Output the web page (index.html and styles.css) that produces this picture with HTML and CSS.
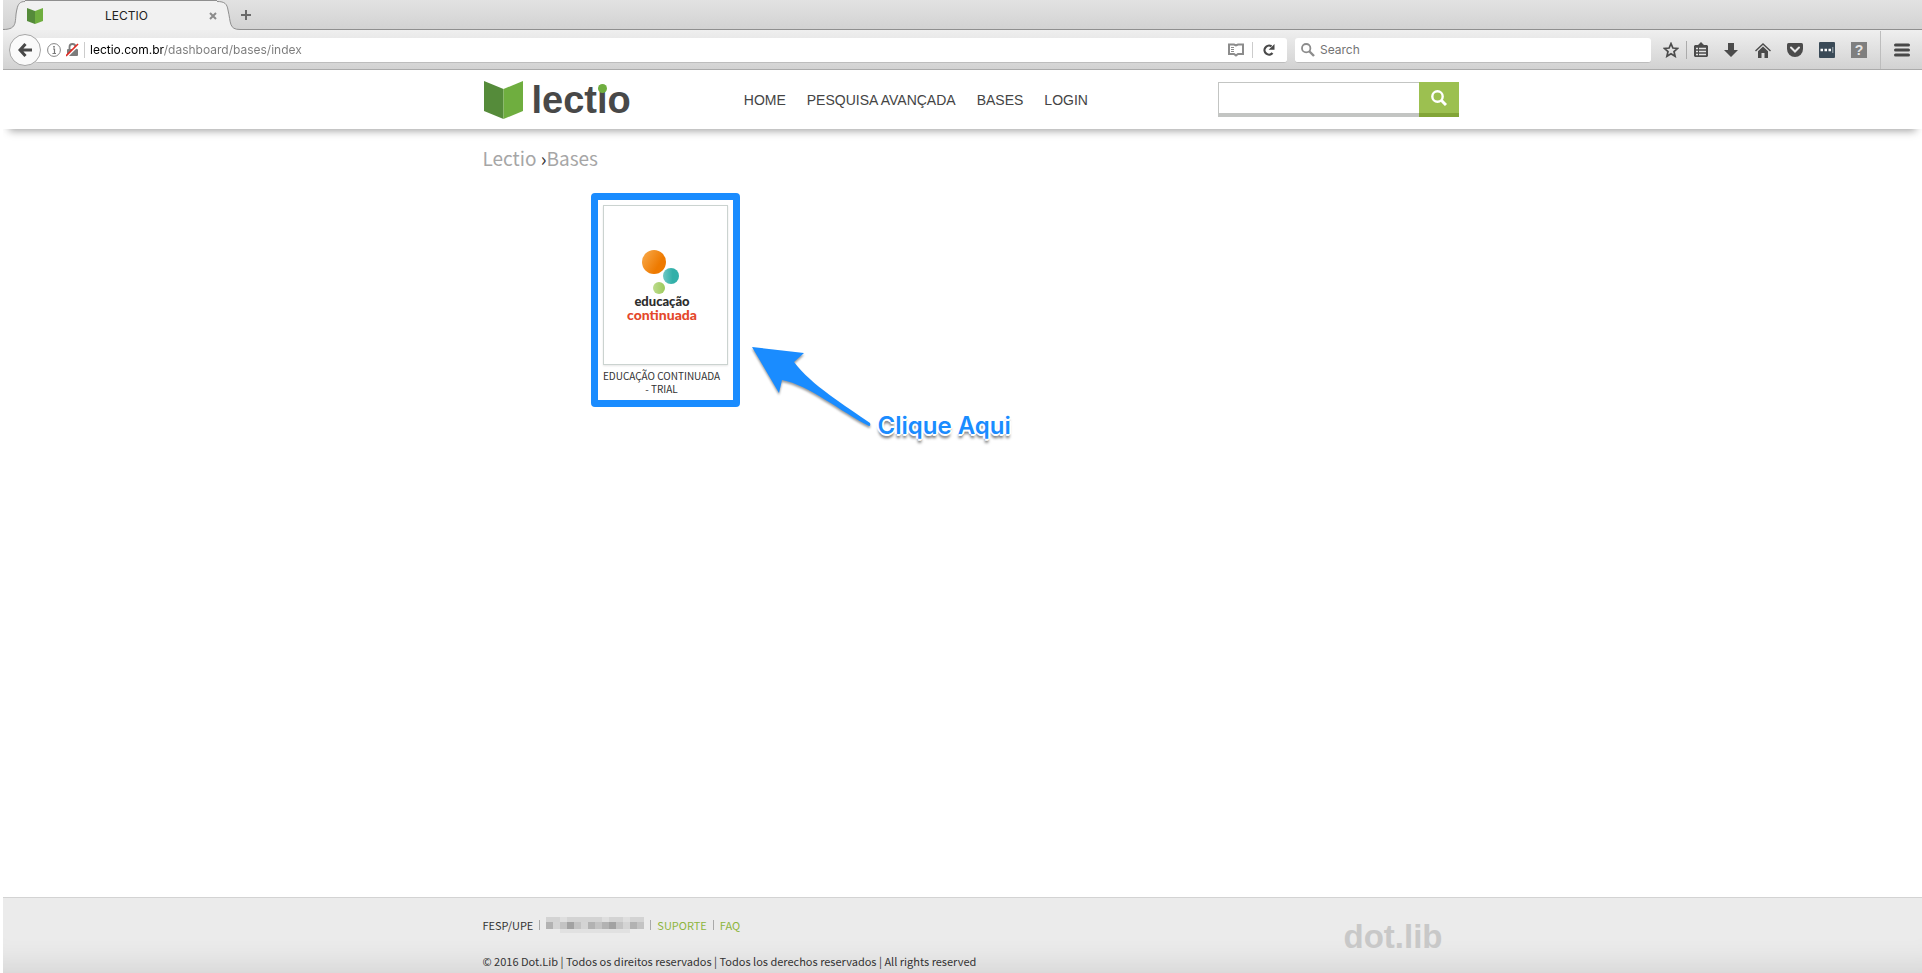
FILE: index.html
```html
<!DOCTYPE html>
<html lang="pt-BR">

<head>
    <meta charset="UTF-8">
    <meta name="viewport" content="width=device-width, initial-scale=1.0">
    <title>LECTIO</title>
    <link rel="stylesheet" href="styles.css">
</head>

<body>

    <!-- Barra de abas -->
    <div class="tabbar">
        <svg class="tab-edge" width="22" height="30" viewBox="0 0 22 30">
            <path d="M0 30V29.5C16 29.5 11 20 14 9C15 4 17 1.5 22 1.5V30Z" fill="#f1f1f1" />
            <path d="M0 29.5C16 29.5 11 20 14 9C15 4 17 1.5 22 1.5" fill="none" stroke="#8f8f8f" />
        </svg>
        <div class="tab">
            <svg width="18" height="18" viewBox="0 0 18 18">
                <path d="M1 1L9 4V17L1 14Z" fill="#558b3a" />
                <path d="M17 1L9 4V17L17 14Z" fill="#6fae3f" />
            </svg>
            <span class="tab-title">LECTIO</span>
            <button class="icon-btn tab-close" aria-label="Close tab">
                <svg width="8" height="8" viewBox="0 0 8 8" stroke="#8c8c8c" stroke-width="2">
                    <path d="M1 1L7 7M7 1L1 7" />
                </svg>
            </button>
        </div>
        <svg class="tab-edge" width="23" height="30" viewBox="0 0 23 30">
            <path d="M0 1.5C8 1.5 10 4 11 10C14 23 12 29.5 23 29.5V30H0Z" fill="#f1f1f1" />
            <path d="M0 1.5C8 1.5 10 4 11 10C14 23 12 29.5 23 29.5" fill="none" stroke="#8f8f8f" />
        </svg>
        <div class="tabs-rest">
            <button class="icon-btn" aria-label="New tab">
                <svg width="12" height="12" viewBox="0 0 12 12" stroke="#6b6b6b" stroke-width="2">
                    <path d="M6 1V11M1 6H11" />
                </svg>
            </button>
        </div>
    </div>

    <!-- Barra de navegação -->
    <div class="toolbar">
        <button class="icon-btn back" aria-label="Back">
            <svg width="14" height="14" viewBox="0 0 14 14" fill="none" stroke="#484848" stroke-width="3">
                <path d="M7.5 1L2 7L7.5 13M2 7H14" />
            </svg>
        </button>
        <div class="field url-field">
            <svg width="14" height="14" viewBox="0 0 14 14">
                <circle cx="7" cy="7" r="6.4" fill="none" stroke="#858585" />
                <path d="M6 6H7.5V10.5M5.5 10.5H9" fill="none" stroke="#777" stroke-width="1.2" />
                <rect x="6.2" y="3" width="1.6" height="1.6" fill="#777" />
            </svg>
            <svg width="13" height="14" viewBox="0 0 13 14">
                <path d="M3.5 6V4a3 3 0 0 1 6 0V6" fill="none" stroke="#7c7c7c" stroke-width="1.8" />
                <rect x="1" y="6" width="11" height="7" rx="1" fill="#7c7c7c" />
                <path d="M1 13.5L13 1.5" stroke="#fff" stroke-width="2" />
                <path d="M0 13L12 1" stroke="#e02a22" stroke-width="1.6" />
            </svg>
            <span class="field-sep"></span>
            <input class="url-input" type="text" value="lectio.com.br/dashboard/bases/index" aria-label="Address">
            <button class="icon-btn reader" aria-label="Reader view">
                <svg width="16" height="14" viewBox="0 0 16 14" fill="none" stroke="#8c8c8c">
                    <path d="M1 1.5H6L8 2.5L10 1.5H15V11H10L8 12.5L6 11H1Z" stroke-width="2" />
                    <path d="M3 4.5H6M3 6.5H6M3 8.5H6" />
                </svg>
            </button>
            <span class="field-sep"></span>
            <button class="icon-btn reload" aria-label="Reload">
                <svg width="12" height="12" viewBox="0 0 12 12">
                    <path d="M9.5 9A4.5 4.5 0 1 1 8.5 2.4" fill="none" stroke="#484848" stroke-width="2.2" />
                    <path d="M11.5 0V5.8H5.6Z" fill="#484848" />
                </svg>
            </button>
        </div>
        <div class="field search-field">
            <svg width="14" height="14" viewBox="0 0 14 14" fill="none" stroke="#8c8c8c">
                <circle cx="5.2" cy="5.2" r="4.2" stroke-width="1.8" />
                <path d="M8 8L13 13" stroke-width="2.4" />
            </svg>
            <input class="search-input" type="text" placeholder="Search" aria-label="Search">
        </div>
        <button class="icon-btn star" aria-label="Bookmark">
            <svg width="16" height="16" viewBox="0 0 16 16">
                <path d="M8 1.6L9.9 6L14.6 6.4L11 9.5L12.1 14.3L8 11.8L3.9 14.3L5 9.5L1.4 6.4L6.1 6Z" fill="none"
                    stroke="#4b4b4b" stroke-width="1.7" />
            </svg>
        </button>
        <button class="icon-btn tool" aria-label="Bookmarks list">
            <svg width="14" height="16" viewBox="0 0 14 16">
                <path d="M1 3H4L7 0L10 3H13L14 4V14L13 15H1L0 14V4Z" fill="#4b4b4b" />
                <path d="M2 6.5H4M5 6.5H12M2 9.5H4M5 9.5H12M2 12.5H4M5 12.5H12" stroke="#e3e3e3" stroke-width="1.5" />
            </svg>
        </button>
        <button class="icon-btn tool" aria-label="Downloads">
            <svg width="14" height="14" viewBox="0 0 14 14">
                <path d="M4 0H10V7H14L7 14L0 7H4Z" fill="#4b4b4b" />
            </svg>
        </button>
        <button class="icon-btn tool" aria-label="Home">
            <svg width="16" height="15" viewBox="0 0 16 15">
                <path d="M0.5 8L8 1L15.5 8" fill="none" stroke="#4b4b4b" stroke-width="1.4" />
                <path d="M8 3.5L13 8.2V15H9.5V10H6.5V15H3V8.2Z" fill="#4b4b4b" />
            </svg>
        </button>
        <button class="icon-btn tool" aria-label="Pocket">
            <svg width="16" height="14" viewBox="0 0 16 14">
                <path d="M1.5 0H14.5Q16 0 16 1.5V6A8 8 0 0 1 0 6V1.5Q0 0 1.5 0Z" fill="#4b4b4b" />
                <path d="M4 4.5L8 8.5L12 4.5" fill="none" stroke="#e8e8e8" stroke-width="2" stroke-linecap="round" />
            </svg>
        </button>
        <button class="icon-btn tool" aria-label="Passwords">
            <svg width="16" height="16" viewBox="0 0 16 16">
                <rect width="16" height="16" rx="1" fill="#3a4a57" />
                <path d="M1.5 8H4M5.5 8H8M9.5 8H12" stroke="#fff" stroke-width="2.4" />
                <path d="M13.8 5V11" stroke="#a9b1b7" />
            </svg>
        </button>
        <button class="icon-btn tool" aria-label="Help">
            <span class="help">?</span>
        </button>
        <button class="icon-btn menu" aria-label="Menu">
            <svg width="16" height="14" viewBox="0 0 16 14" stroke="#484848" stroke-width="3" stroke-linecap="round">
                <path d="M1.5 2H14.5M1.5 7H14.5M1.5 12H14.5" />
            </svg>
        </button>
    </div>

    <!-- Cabeçalho do site -->
    <header class="header">
        <div class="container header-inner">
            <a class="logo" href="#">
                <svg width="39" height="38" viewBox="0 0 39 38">
                    <path d="M0 0L19.5 8V38L0 30Z" fill="#558b3a" />
                    <path d="M39 0L19.5 8V38L39 30Z" fill="#6fae3f" />
                </svg>
                <span class="logo-text">lect<span class="logo-i">i</span>o</span>
            </a>
            <nav class="nav">
                <a href="#">HOME</a>
                <a href="#">PESQUISA AVANÇADA</a>
                <a href="#">BASES</a>
                <a href="#">LOGIN</a>
            </nav>
            <form class="site-search">
                <input type="text" name="q" aria-label="Pesquisar">
                <button type="button" aria-label="Buscar">
                    <svg width="16" height="16" viewBox="0 0 16 16" fill="none" stroke="#fff">
                        <circle cx="6.5" cy="6.5" r="5.2" stroke-width="2.4" />
                        <path d="M10.5 10.5L15 15" stroke-width="3" />
                    </svg>
                </button>
            </form>
        </div>
    </header>

    <main class="container main">
        <h1 class="breadcrumb"><a href="#">Lectio</a> ›<a href="#">Bases</a></h1>

        <div class="bases">
            <a class="base" href="#">
                <span class="cover">
                    <svg width="42" height="46" viewBox="0 0 42 46">
                        <defs>
                            <linearGradient id="orange" x1="0" y1="0.2" x2="1" y2="0.8">
                                <stop offset="0.1" stop-color="#f6a03c" />
                                <stop offset="0.7" stop-color="#ee7a00" />
                            </linearGradient>
                            <linearGradient id="teal">
                                <stop offset="0" stop-color="#70c8c4" />
                                <stop offset="0.6" stop-color="#32b0a9" />
                            </linearGradient>
                            <linearGradient id="lime">
                                <stop offset="0" stop-color="#bddb8d" />
                                <stop offset="1" stop-color="#9cca5c" />
                            </linearGradient>
                        </defs>
                        <circle cx="13" cy="13" r="12" fill="url(#orange)" />
                        <circle cx="30" cy="27" r="8" fill="url(#teal)" />
                        <circle cx="18" cy="39" r="6" fill="url(#lime)" />
                    </svg>
                    <span class="brand-top">educação</span>
                    <span class="brand-bottom">continuada</span>
                </span>
                <span class="caption">EDUCAÇÃO CONTINUADA - TRIAL</span>
            </a>

            <!-- Seta e texto sobre a página -->
            <div class="hint">
                <svg width="122" height="84" viewBox="0 0 122 84">
                    <path d="M1 1L53 7L43 16C60 39 95 60 119 77Q120 80 118 80C90 66 58 39 31 34L28 47Z" fill="#1a8cff" />
                </svg>
                <span class="hint-text">Clique Aqui</span>
            </div>
        </div>
    </main>

    <footer class="footer">
        <div class="container footer-inner">
            <div>
                <div class="footer-links">
                    <span>FESP/UPE</span>
                    <span class="bar"></span>
                    <svg width="98" height="16" viewBox="0 0 98 16" shape-rendering="crispEdges">
                        <rect width="98" height="5" fill="#d3d3d3" />
                        <path d="M14 0h7v5h-7zM56 0h7v5h-7zM77 0h7v5h-7z" fill="#dedede" />
                        <rect y="5" width="98" height="7" fill="#c3c3c3" />
                        <path d="M0 5h7v7h-7zM42 5h7v7h-7zM56 5h7v7h-7zM84 5h7v7h-7z" fill="#b2b2b2" />
                        <path d="M21 5h7v7h-7zM63 5h7v7h-7z" fill="#a2a2a2" />
                        <path d="M7 5h7v7h-7zM35 5h7v7h-7zM77 5h7v7h-7z" fill="#d4d4d4" />
                        <rect x="14" y="12" width="70" height="4" fill="#e1e1e1" />
                    </svg>
                    <span class="bar"></span>
                    <a href="#">SUPORTE</a>
                    <span class="bar"></span>
                    <a href="#">FAQ</a>
                </div>
                <p class="copyright">© 2016 Dot.Lib | Todos os direitos reservados | Todos los derechos reservados | All
                    rights reserved</p>
            </div>
            <div class="dotlib">dot.lib</div>
        </div>
    </footer>

</body>

</html>
```
FILE: styles.css
```css
* {
    box-sizing: border-box;
}

body {
    margin: 0 0 0 3px;
    min-height: 100vh;
    display: flex;
    flex-direction: column;
    background: #fff;
    color: #333;
    font-family: "Noto Sans CJK SC", "Noto Sans", sans-serif;
    overflow-x: hidden;
}

a {
    color: inherit;
    text-decoration: none;
}

svg {
    display: block;
    flex-shrink: 0;
}

.icon-btn {
    display: flex;
    align-items: center;
    justify-content: center;
    padding: 0;
    border: none;
    background: none;
    cursor: pointer;
}

/* Abas */
.tabbar {
    display: flex;
    height: 30px;
    background: linear-gradient(#e2e2e2, #d2d2d2);
    font-family: Inter, Roboto, sans-serif;
    font-size: 12px;
}

.tab {
    display: flex;
    align-items: center;
    width: 192px;
    padding-left: 1px;
    border-top: 1px solid #8f8f8f;
    background: #f1f1f1;
}

.tab-title {
    flex: 1;
    text-align: center;
    color: #222;
}

.tabs-rest {
    flex: 1;
    display: flex;
    align-items: center;
    border-bottom: 1px solid #8f8f8f;
}

/* Barra de ferramentas */
.toolbar {
    display: flex;
    align-items: center;
    height: 40px;
    padding: 1px 0 0 6px;
    background: linear-gradient(#efefef, #d2d2d2);
    border-bottom: 1px solid #ababab;
    font-family: Inter, Roboto, sans-serif;
}

.back {
    width: 32px;
    height: 32px;
    border: 1px solid #a6a6a6;
    border-radius: 50%;
    background: #fafafa;
    z-index: 1;
}

.field {
    display: flex;
    align-items: center;
    height: 25px;
    border-bottom: 1px solid #bdbdbd;
    border-radius: 3px;
    background: #fff;
}

.field input {
    flex: 1;
    min-width: 0;
    padding: 0;
    border: none;
    outline: none;
    background: none;
    font-family: inherit;
    font-size: 12px;
}

.field-sep {
    width: 1px;
    height: 16px;
    background: #ccc;
}

.url-field {
    flex: 1;
    gap: 5px;
    margin-left: -6px;
    padding: 0 12px;
}

/* domínio em preto, caminho em cinza */
.url-field .url-input {
    background: linear-gradient(90deg, #000 74px, #7a7a7a 74px);
    background-clip: text;
    -webkit-background-clip: text;
    color: transparent;
}

.reader {
    margin-right: 3px;
}

.reload {
    margin-left: 5px;
}

.search-field {
    flex: 0 1 356px;
    gap: 5px;
    margin-left: 8px;
    padding: 0 6px;
}

.search-field input::placeholder {
    color: #737373;
    opacity: 1;
}

.star {
    width: 32px;
    height: 18px;
    margin-left: 4px;
    border-right: 1px solid #ababab;
}

.star + .tool {
    width: 28px;
}

.tool {
    width: 32px;
}

.help {
    width: 16px;
    height: 16px;
    background: #7f7f7f;
    color: #e6e6e6;
    font: bold 14px/16px "Liberation Sans", sans-serif;
}

.menu {
    width: 42px;
    height: 100%;
    margin-left: 5px;
    border-left: 1px solid #bdbdbd;
}

/* Site */
.container {
    width: 100%;
    max-width: 960px;
    margin: 0 auto;
}

.header {
    box-shadow: 0 8px 8px -6px rgba(0, 0, 0, 0.36);
}

.header-inner {
    display: flex;
    align-items: center;
    height: 59px;
}

.logo {
    display: flex;
    align-items: center;
    gap: 9px;
    margin-left: 1px;
}

.logo-text {
    font: bold 38px/38px "Liberation Sans", Arial, sans-serif;
    color: #484848;
}

.logo-i {
    position: relative;
}

.logo-i::before {
    content: "";
    position: absolute;
    top: 5px;
    left: 1px;
    width: 9px;
    height: 9px;
    border-radius: 50%;
    background: #6fae3f;
}

.nav {
    display: flex;
    gap: 21px;
    margin-left: 113px;
    font: 14px/20px "Liberation Sans", Arial, sans-serif;
    color: #444;
}

.site-search {
    display: flex;
    height: 35px;
    margin: 0 -16px 0 auto;
}

.site-search input {
    width: 201px;
    border: 1px solid #c3c5c3;
    border-right: none;
    border-bottom-width: 4px;
    outline: none;
}

.site-search button {
    display: flex;
    align-items: center;
    justify-content: center;
    width: 40px;
    padding: 0;
    border: none;
    border-bottom: 4px solid #82a537;
    background: #9cc050;
}

.main {
    flex: 1;
}

.breadcrumb {
    margin: 17px 0 0;
    font-size: 19px;
    line-height: 24px;
    font-weight: 400;
    color: #333;
}

.breadcrumb a {
    color: #a6a6a6;
}

.bases {
    display: flex;
    align-items: flex-start;
    gap: 11px;
    margin: 23px 0 0 108px;
}

.base {
    width: 149px;
    padding: 5px;
    border: 7px solid #1a8cff;
    border-radius: 4px;
    font-size: 10px;
    line-height: 13px;
    text-align: center;
}

.cover {
    display: flex;
    flex-direction: column;
    align-items: center;
    width: 125px;
    height: 160px;
    padding: 43px 6px 0 0;
    border: 1px solid #cbd3d0;
    box-shadow: 0 1px 2px rgba(0, 0, 0, 0.1);
    font-family: Lato, sans-serif;
    font-size: 13px;
    font-weight: 900;
}

.brand-top {
    color: #2d2d2d;
}

.brand-bottom {
    font-size: 14px;
    color: #e4482b;
}

.caption {
    display: block;
    width: 118px;
    padding-top: 4px;
}

.hint {
    display: flex;
    align-items: flex-start;
    gap: 5px;
    margin-top: 153px;
}

.hint svg {
    filter: drop-shadow(0 2px 1px rgba(0, 0, 0, 0.4));
}

.hint-text {
    margin-top: 66px;
    font: 600 24px/28px Inter, "Liberation Sans", sans-serif;
    color: #1a8cff;
    text-shadow: 2px 0 #fff, -2px 0 #fff, 0 2px #fff, 0 -2px #fff, 1px 1px #fff, -1px -1px #fff, 0 4px 3px rgba(0, 0, 0, 0.6);
}

/* Rodapé */
.footer {
    border-top: 1px solid #d3d3d3;
    background: #ebebeb;
    box-shadow: inset 0 -36px 32px -32px rgba(0, 0, 0, 0.12);
    font-size: 11px;
    line-height: 16px;
}

.footer-inner {
    display: flex;
    justify-content: space-between;
    padding: 19px 0 4px;
}

.footer-links {
    display: flex;
    align-items: center;
    gap: 6px;
}

.footer-links a {
    color: #8db53c;
}

.bar {
    width: 1px;
    height: 10px;
    background: #aaa;
}

.copyright {
    margin: 20px 0 0;
}

.dotlib {
    font: bold 33px/40px "Liberation Sans", Arial, sans-serif;
    color: #c8c8c8;
}
```
